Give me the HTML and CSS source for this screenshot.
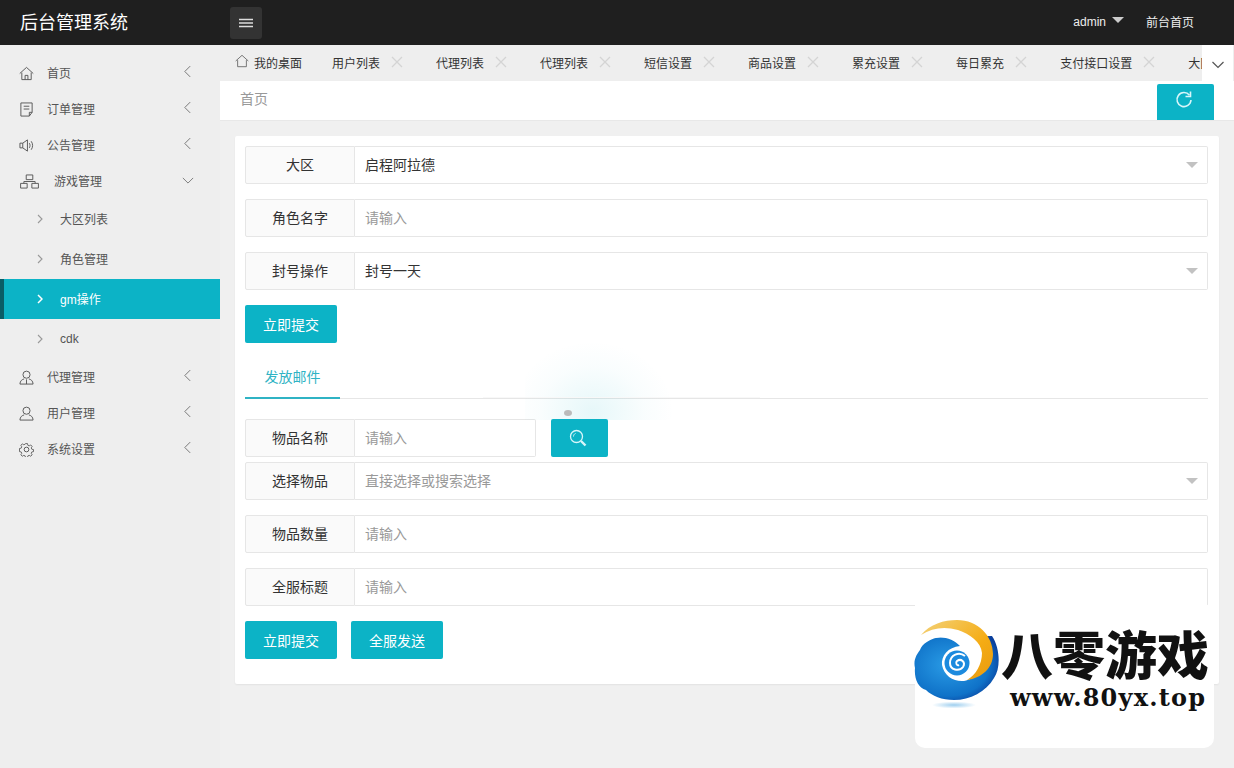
FILE: index.html
```html
<!DOCTYPE html>
<html lang="en">

<head>
    <meta charset="UTF-8">
    <meta name="viewport" content="width=device-width, initial-scale=1.0">
    <title>后台管理系统</title>
    <link rel="stylesheet" href="styles.css">
</head>

<body>
    <!-- Top bar -->
    <header class="topbar">
        <div class="brand">后台管理系统</div>
        <button class="menu-btn">
            <svg width="16" height="10" viewBox="0 0 16 10"><path d="M1 1.500h14M1 5h14M1 8.500h14" stroke="#ddd" stroke-width="1.400" fill="none"/></svg>
        </button>
        <div class="top-right">
            <span class="admin">admin</span>
            <span class="caret"></span>
            <span class="front-link">前台首页</span>
        </div>
    </header>

    <div class="layout">
        <!-- Sidebar -->
        <aside class="sidebar">
            <div class="nav-item">
                <svg class="nav-icon" viewBox="0 0 16 16"><path d="M.8 8 8 1.500 15.200 8M3 7v7.500h10V7M6.500 14.500V10h3v4.500" /></svg>
                <span class="nav-text">首页</span>
                <svg class="nav-arrow" viewBox="0 0 10 14"><path d="M8 1 2 7l6 6" /></svg>
            </div>
            <div class="nav-item">
                <svg class="nav-icon" viewBox="0 0 16 16"><path d="M2 1h12v10l-3 4H2zM5 4.500h6M5 7.500h6M11 15v-4h3" /></svg>
                <span class="nav-text">订单管理</span>
                <svg class="nav-arrow" viewBox="0 0 10 14"><path d="M8 1 2 7l6 6" /></svg>
            </div>
            <div class="nav-item">
                <svg class="nav-icon" viewBox="0 0 16 16"><path d="M1 5.500h3L9 2v12L4 10.500H1zM4 5.500v5M11 5.500c1 1.500 1 3.500 0 5M13 3.500c2 2.500 2 6.500 0 9" /></svg>
                <span class="nav-text">公告管理</span>
                <svg class="nav-arrow" viewBox="0 0 10 14"><path d="M8 1 2 7l6 6" /></svg>
            </div>
            <div class="nav-item nav-open">
                <svg class="nav-icon nav-icon-wide" viewBox="0 0 22 16"><path d="M7.500 1h7v5h-7zM1.500 10h7v5h-7zM13.500 10h7v5h-7zM5 10V8h12v2" /></svg>
                <span class="nav-text">游戏管理</span>
                <svg class="nav-arrow nav-arrow-down" viewBox="0 0 14 10"><path d="M1 2l6 6 6-6" /></svg>
            </div>
            <div class="sub-item">
                <svg class="sub-arrow" viewBox="0 0 6 10"><path d="M1 1l4 4-4 4" /></svg>
                <span class="sub-text">大区列表</span>
            </div>
            <div class="sub-item">
                <svg class="sub-arrow" viewBox="0 0 6 10"><path d="M1 1l4 4-4 4" /></svg>
                <span class="sub-text">角色管理</span>
            </div>
            <div class="sub-item sub-active">
                <svg class="sub-arrow" viewBox="0 0 6 10"><path d="M1 1l4 4-4 4" /></svg>
                <span class="sub-text">gm操作</span>
            </div>
            <div class="sub-item">
                <svg class="sub-arrow" viewBox="0 0 6 10"><path d="M1 1l4 4-4 4" /></svg>
                <span>cdk</span>
            </div>
            <div class="nav-item">
                <svg class="nav-icon" viewBox="0 0 16 16"><circle cx="8" cy="5" r="3.800" /><path d="M1 15c0-3.500 2.500-5 4.500-5.500M15 15c0-3.500-2.500-5-4.500-5.500M1 15h14M8 10v5" /></svg>
                <span class="nav-text">代理管理</span>
                <svg class="nav-arrow" viewBox="0 0 10 14"><path d="M8 1 2 7l6 6" /></svg>
            </div>
            <div class="nav-item">
                <svg class="nav-icon" viewBox="0 0 16 16"><circle cx="8" cy="5" r="3.800" /><path d="M1 15c0-3.500 2.500-5 4.500-5.500M15 15c0-3.500-2.500-5-4.500-5.500M1 15h14" /></svg>
                <span class="nav-text">用户管理</span>
                <svg class="nav-arrow" viewBox="0 0 10 14"><path d="M8 1 2 7l6 6" /></svg>
            </div>
            <div class="nav-item">
                <svg class="nav-icon" viewBox="0 0 16 16"><circle cx="8" cy="8" r="2.500" /><path d="M6.800 1h2.400l.4 2 1.600.7 1.800-1.100 1.700 1.700-1.100 1.800.7 1.600 2 .4v2.400l-2 .4-.7 1.600 1.100 1.800-1.700 1.700-1.800-1.100-1.600.7-.4 2H6.800l-.4-2-1.600-.7-1.800 1.100-1.700-1.700 1.100-1.800-.7-1.600-2-.4V6.800l2-.4.7-1.600-1.100-1.800 1.700-1.700 1.800 1.100 1.600-.7z" transform="translate(.8 .8) scale(.9)" /></svg>
                <span class="nav-text">系统设置</span>
                <svg class="nav-arrow" viewBox="0 0 10 14"><path d="M8 1 2 7l6 6" /></svg>
            </div>
        </aside>

        <main class="main">
            <!-- Open tabs -->
            <div class="tabs-bar">
                <div class="tabs-strip">
                    <div class="tab tab-home">
                        <svg class="tab-home-icon" viewBox="0 0 16 16"><path d="M.8 8 8 1.500 15.200 8M3 7v7.500h10V7" /></svg>
                        <span>我的桌面</span>
                    </div>
                    <div class="tab"><span>用户列表</span><svg class="tab-x" viewBox="0 0 12 12"><path d="M1 1l10 10M11 1 1 11" /></svg></div>
                    <div class="tab"><span>代理列表</span><svg class="tab-x" viewBox="0 0 12 12"><path d="M1 1l10 10M11 1 1 11" /></svg></div>
                    <div class="tab"><span>代理列表</span><svg class="tab-x" viewBox="0 0 12 12"><path d="M1 1l10 10M11 1 1 11" /></svg></div>
                    <div class="tab"><span>短信设置</span><svg class="tab-x" viewBox="0 0 12 12"><path d="M1 1l10 10M11 1 1 11" /></svg></div>
                    <div class="tab"><span>商品设置</span><svg class="tab-x" viewBox="0 0 12 12"><path d="M1 1l10 10M11 1 1 11" /></svg></div>
                    <div class="tab"><span>累充设置</span><svg class="tab-x" viewBox="0 0 12 12"><path d="M1 1l10 10M11 1 1 11" /></svg></div>
                    <div class="tab"><span>每日累充</span><svg class="tab-x" viewBox="0 0 12 12"><path d="M1 1l10 10M11 1 1 11" /></svg></div>
                    <div class="tab"><span>支付接口设置</span><svg class="tab-x" viewBox="0 0 12 12"><path d="M1 1l10 10M11 1 1 11" /></svg></div>
                    <div class="tab"><span>大区</span></div>
                </div>
                <button class="tabs-more">
                    <svg width="14" height="10" viewBox="0 0 14 10"><path d="M1.500 2 7 7.500 12.500 2" stroke="#555" stroke-width="1.200" fill="none"/></svg>
                </button>
            </div>

            <div class="crumb-bar">
                <span class="crumb">首页</span>
                <button class="refresh-btn">
                    <svg width="20" height="20" viewBox="0 0 20 20"><path d="M15.500 5.200A7 7 0 1 0 17 10" stroke="#d8f6fa" stroke-width="1.600" fill="none"/><path d="M16.500 1.500v5h-5" stroke="#d8f6fa" stroke-width="1.600" fill="none"/></svg>
                </button>
            </div>

            <div class="content">
                <div class="card">
                    <div class="form-row">
                        <label class="form-label">大区</label>
                        <div class="form-field field-value">启程阿拉德<span class="select-caret"></span></div>
                    </div>
                    <div class="form-row">
                        <label class="form-label">角色名字</label>
                        <div class="form-field field-hint">请输入</div>
                    </div>
                    <div class="form-row">
                        <label class="form-label">封号操作</label>
                        <div class="form-field field-value">封号一天<span class="select-caret"></span></div>
                    </div>
                    <div class="btn-row">
                        <button class="btn">立即提交</button>
                    </div>

                    <div class="section-tabs">
                        <div class="section-tab">发放邮件</div>
                    </div>

                    <div class="form-row row-tight">
                        <div class="search-group">
                            <label class="form-label">物品名称</label>
                            <div class="form-field field-hint">请输入</div>
                        </div>
                        <button class="search-btn">
                            <svg width="18" height="18" viewBox="0 0 18 18"><circle cx="7.500" cy="7.500" r="6" stroke="#d8f6fa" stroke-width="1.300" fill="none"/><path d="M12 12l4.500 4.500" stroke="#d8f6fa" stroke-width="2.400"/><path d="M4.500 7.500c0-1.500 1-2.800 2-3" stroke="#d8f6fa" fill="none"/></svg>
                        </button>
                    </div>
                    <div class="form-row">
                        <label class="form-label">选择物品</label>
                        <div class="form-field field-hint">直接选择或搜索选择<span class="select-caret"></span></div>
                    </div>
                    <div class="form-row">
                        <label class="form-label">物品数量</label>
                        <div class="form-field field-hint">请输入</div>
                    </div>
                    <div class="form-row">
                        <label class="form-label">全服标题</label>
                        <div class="form-field field-hint">请输入</div>
                    </div>
                    <div class="btn-row">
                        <button class="btn">立即提交</button>
                        <button class="btn">全服发送</button>
                    </div>
                </div>
            </div>
        </main>
    </div>

    <!-- Watermark over the page -->
    <div class="glow"></div>
    <div class="glow-spot"></div>
    <div class="glow-line"></div>
    <div class="logo-card">
        <div class="logo-top">
            <svg class="logo-mark" width="88" height="96" viewBox="0 0 88 96">
                <defs>
                    <linearGradient id="gold" x1="0" y1="0" x2="1" y2="1">
                        <stop offset="0" stop-color="#f3d27a"/>
                        <stop offset="0.600" stop-color="#f5ac14"/>
                        <stop offset="1" stop-color="#e89a10"/>
                    </linearGradient>
                    <radialGradient id="sea" cx="0.400" cy="0.450" r="0.650">
                        <stop offset="0" stop-color="#2a9ce6"/>
                        <stop offset="0.750" stop-color="#0f72c8"/>
                        <stop offset="1" stop-color="#0a3f9c"/>
                    </radialGradient>
                    <radialGradient id="shine" cx="0.500" cy="0.500" r="0.500">
                        <stop offset="0" stop-color="#9fcfef"/>
                        <stop offset="1" stop-color="#ffffff"/>
                    </radialGradient>
                </defs>
                <ellipse cx="40" cy="87" rx="22" ry="3.500" fill="url(#shine)"/>
                <path d="M78 18C86 30 87 50 80 60 72 74 56 82 40 82 28 82 18 78 12 72 4 70 0 60 1 50-1 42 3 36 6 32 8 26 16 20 28 19Z" fill="url(#sea)"/>
                <path d="M7 17C20 9 34 8 45 11 60 15 71 24 71 37 71 50 62 61 50 63 40 64 30 58 28 47 27 38 34 29 46 28 40 21 30 18 20 20 14 21 10 23 7 25Z" fill="#fff"/>
                <path d="M7 17C16 6 30 2 43 2 64 2 79 18 79 36 79 50 68 60 53 62 62 57 68 46 68 35 67 24 56 16 44 12 30 8 18 10 7 17Z" fill="url(#gold)"/>
                <circle cx="43" cy="45" r="12.500" fill="#1c8ade"/>
                <path d="M51 38C45 33 36 37 36 45 36 52 45 54 49 49 52 44 47 40 43 43 41 45 43 48 45 47" fill="none" stroke="#fff" stroke-width="2"/>
            </svg>
            <span class="logo-name">八零游戏</span>
        </div>
        <div class="logo-url">www.80yx.top</div>
    </div>
</body>

</html>
```

FILE: styles.css
```css
* {
    margin: 0;
    padding: 0;
    box-sizing: border-box;
}

body {
    font-family: "Liberation Sans", "Noto Sans CJK SC", sans-serif;
    font-size: 12px;
    background: #f0f0f0;
    color: #333;
    width: 1234px;
    height: 768px;
    overflow: hidden;
    position: relative;
}

button {
    border: 0;
    cursor: pointer;
    font-family: inherit;
}

.topbar {
    height: 45px;
    background: #1f1f1f;
    display: flex;
    align-items: center;
    color: #fff;
}

.brand {
    width: 230px;
    padding-left: 20px;
    font-size: 18px;
    padding-bottom: 3px;
}

.menu-btn {
    width: 32px;
    height: 32px;
    background: #333;
    border-radius: 3px;
    display: flex;
    align-items: center;
    justify-content: center;
}

.top-right {
    margin-left: auto;
    display: flex;
    align-items: center;
    padding-right: 40px;
    padding-bottom: 2px;
    color: #eee;
}

.caret {
    width: 0;
    height: 0;
    border-left: 6px solid transparent;
    border-right: 6px solid transparent;
    border-top: 6px solid #ccc;
    margin: 0 22px 4px 6px;
}

.layout {
    display: flex;
    height: 723px;
}

.sidebar {
    width: 220px;
    background: #eee;
    padding-top: 10px;
    flex-shrink: 0;
}

.nav-item {
    height: 36px;
    display: flex;
    align-items: center;
    padding-left: 19px;
    color: #555;
}

.nav-icon {
    width: 15px;
    height: 15px;
    margin-right: 13px;
    fill: none;
    stroke: #555;
    stroke-width: 1;
    flex-shrink: 0;
}

.nav-icon-wide {
    width: 21px;
    height: 15px;
    margin-right: 14px;
}

.nav-text {
    flex: 1;
    margin-bottom: 2px;
}

.nav-arrow {
    width: 9px;
    height: 13px;
    margin: 0 28px 3px 0;
    fill: none;
    stroke: #777;
    stroke-width: 1.100;
}

.nav-arrow-down {
    width: 12px;
    height: 9px;
    margin-right: 26px;
    margin-bottom: 2px;
}

.sub-item {
    height: 40px;
    display: flex;
    align-items: center;
    padding-left: 37px;
    color: #555;
}

.sub-text {
    margin-bottom: 2px;
}

.sub-arrow {
    width: 6px;
    height: 10px;
    margin-right: 17px;
    fill: none;
    stroke: #999;
    stroke-width: 1.100;
}

.sub-active {
    background: #0cb3c6;
    border-left: 4px solid #0a5d66;
    padding-left: 33px;
    color: #fff;
}

.sub-active .sub-arrow {
    stroke: #fff;
    stroke-width: 1.500;
}

.main {
    flex: 1;
    min-width: 0;
    display: flex;
    flex-direction: column;
}

.tabs-bar {
    height: 36px;
    background: #eee;
    display: flex;
    position: relative;
}

.tabs-strip {
    flex: 1;
    min-width: 0;
    display: flex;
    align-items: center;
    overflow: hidden;
    padding-left: 15px;
    padding-bottom: 2px;
    color: #333;
}

.tab {
    display: flex;
    align-items: center;
    flex-shrink: 0;
    margin-right: 33px;
}

.tab-home {
    margin-right: 30px;
}

.tab-home-icon {
    width: 14px;
    height: 14px;
    margin: 0 5px 3px 0;
    fill: none;
    stroke: #666;
    stroke-width: 1;
}

.tab-x {
    width: 12px;
    height: 12px;
    margin-left: 11px;
    fill: none;
    stroke: #d4d4d4;
    stroke-width: 1.300;
}

.tabs-more {
    width: 31px;
    height: 36px;
    margin-right: 1px;
    padding-top: 5px;
    background: #fff;
    flex-shrink: 0;
}

.crumb-bar {
    height: 40px;
    background: #fff;
    border-bottom: 1px solid #e8e8e8;
    display: flex;
    justify-content: space-between;
    padding-left: 20px;
    padding-right: 20px;
}

.crumb {
    font-size: 14px;
    color: #999;
    line-height: 37px;
}

.refresh-btn {
    width: 57px;
    height: 36px;
    margin-top: 3px;
    background: #0cb3c6;
    border-radius: 2px 2px 0 0;
}

.refresh-btn svg {
    display: block;
    margin: 0 auto 4px;
    transform: translateX(-2px);
}

.content {
    flex: 1;
    padding: 15px 15px 0;
}

.card {
    height: 548px;
    background: #fff;
    border-radius: 2px;
    box-shadow: 0 1px 2px rgba(0, 0, 0, 0.06);
    padding: 10px 11px 0 10px;
}

.form-row {
    display: flex;
    height: 38px;
    margin-bottom: 15px;
}

.row-tight {
    margin-bottom: 5px;
}

.form-label {
    width: 110px;
    flex-shrink: 0;
    font-size: 14px;
    line-height: 36px;
    text-align: center;
    color: #333;
    background: #fafafa;
    border: 1px solid #e6e6e6;
    border-radius: 2px 0 0 2px;
}

.form-field {
    flex: 1;
    position: relative;
    font-size: 14px;
    line-height: 36px;
    padding-left: 10px;
    border: 1px solid #e6e6e6;
    border-left: 0;
    border-radius: 0 2px 2px 0;
}

.field-value {
    color: #333;
}

.field-hint {
    color: #999;
}

.select-caret {
    position: absolute;
    right: 9px;
    top: 15px;
    width: 0;
    height: 0;
    border-left: 6px solid transparent;
    border-right: 6px solid transparent;
    border-top: 6px solid #c2c2c2;
}

.btn-row {
    display: flex;
    gap: 14px;
}

.btn {
    width: 92px;
    height: 38px;
    background: #0cb3c6;
    color: #fff;
    font-size: 14px;
    border-radius: 2px;
}

.section-tabs {
    height: 38px;
    margin-top: 18px;
    margin-bottom: 20px;
    border-bottom: 1px solid #e6e6e6;
}

.section-tab {
    width: 95px;
    height: 38px;
    line-height: 33px;
    text-align: center;
    font-size: 14px;
    color: #2fb3c4;
    border-bottom: 2px solid #2fb3c4;
}

.search-group {
    width: 291px;
    display: flex;
}

.search-btn {
    width: 57px;
    height: 38px;
    margin-left: 15px;
    padding-right: 4px;
    background: #0cb3c6;
    border-radius: 2px;
    display: flex;
    align-items: center;
    justify-content: center;
}

.glow {
    position: absolute;
    left: 525px;
    top: 340px;
    width: 150px;
    height: 80px;
    background: radial-gradient(ellipse at 45% 90%, rgba(12, 179, 198, 0.1), rgba(12, 179, 198, 0.025) 45%, rgba(12, 179, 198, 0) 70%);
}

.glow-spot {
    position: absolute;
    left: 564px;
    top: 410px;
    width: 8px;
    height: 6px;
    border-radius: 50%;
    background: #bbb;
}

.glow-line {
    position: absolute;
    left: 483px;
    top: 397px;
    width: 277px;
    height: 1px;
    background: #f8f8f8;
}

.logo-card {
    position: absolute;
    left: 915px;
    top: 605px;
    width: 299px;
    height: 143px;
    background: #fff;
    border-radius: 0 0 10px 10px;
}

.logo-top {
    display: flex;
    align-items: flex-start;
    position: relative;
}

.logo-mark {
    position: absolute;
    left: -1px;
    top: 13px;
}

.logo-name {
    margin: 25px 0 0 86px;
    font-size: 52px;
    line-height: 54px;
    font-weight: 900;
    color: #111;
    white-space: nowrap;
}

.logo-url {
    margin: 0 0 0 95px;
    font-family: "DejaVu Serif", serif;
    font-size: 24px;
    line-height: 28px;
    font-weight: 700;
    letter-spacing: 1.200px;
    color: #111;
    white-space: nowrap;
}
```
